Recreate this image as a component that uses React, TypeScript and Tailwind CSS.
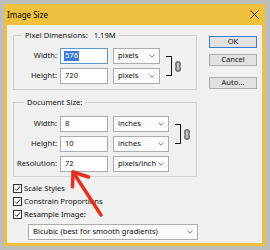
import React from "react";

const font = { fontFamily: '"Noto Sans", "Segoe UI", sans-serif' };

function Chevron() {
  return (
    <svg width="6" height="4" viewBox="0 0 6 4" className="shrink-0">
      <path d="M0.5 0.8 L3 3.2 L5.5 0.8" fill="none" stroke="#707070" strokeWidth="0.9" />
    </svg>
  );
}

function Select({ label, w }: { label: string; w: string }) {
  return (
    <div className={`${w} h-[16px] border border-[#acacac] bg-[#fbfbfb] flex items-center justify-between pl-[4px] pr-[4px]`}>
      <span className="leading-none whitespace-nowrap">{label}</span>
      <Chevron />
    </div>
  );
}

function Input({ value, selected }: { value: string; selected?: boolean }) {
  return (
    <div
      className={`w-[48px] h-[16px] bg-white border flex items-center pl-[3px] ${
        selected ? "border-[#5b9bd5]" : "border-[#abadb3]"
      }`}
    >
      {selected ? (
        <span className="bg-[#3d7bd6] text-white leading-none px-[1px] py-[1px]">{value}</span>
      ) : (
        <span className="leading-none pl-[1px]">{value}</span>
      )}
    </div>
  );
}

function Row({ label, value, unit, unitW, selected }: { label: string; value: string; unit: string; unitW: string; selected?: boolean }) {
  return (
    <div className="flex items-center h-[16px]">
      <div className="w-[46px] text-right pr-[3px] leading-none">{label}</div>
      <Input value={value} selected={selected} />
      <div className="w-[5px]" />
      <Select label={unit} w={unitW} />
    </div>
  );
}

function Link() {
  return (
    <div className="flex items-center">
      <div className="w-[6px] h-[20px] border-t-[1.5px] border-r-[1.5px] border-b-[1.5px] border-[#111]" />
      <svg width="6" height="11" viewBox="0 0 6 11" className="ml-[3px]">
        <rect x="0.5" y="0.5" width="5" height="5.5" rx="2.3" fill="#8a8a8a" stroke="#555" strokeWidth="0.8" />
        <rect x="0.5" y="5" width="5" height="5.5" rx="2.3" fill="#8a8a8a" stroke="#555" strokeWidth="0.8" />
        <rect x="2" y="2" width="2" height="7" rx="1" fill="#c4c4c4" />
      </svg>
    </div>
  );
}

function Check({ label }: { label: string }) {
  return (
    <div className="flex items-center h-[13px]">
      <div className="w-[9px] h-[9px] bg-white border border-[#333] flex items-center justify-center">
        <svg width="7" height="7" viewBox="0 0 7 7">
          <path d="M1 3.6 L2.8 5.4 L6 1.4" fill="none" stroke="#222" strokeWidth="1" />
        </svg>
      </div>
      <span className="ml-[2px] leading-none">{label}</span>
    </div>
  );
}

function Btn({ label, primary }: { label: string; primary?: boolean }) {
  return (
    <div
      className={`w-[48px] h-[12px] bg-[#e1e1e1] flex items-center justify-center leading-none ${
        primary ? "border-[1.5px] border-[#3c7fd1]" : "border border-[#adadad]"
      }`}
    >
      {label}
    </div>
  );
}

export default function App() {
  return (
    <div className="relative w-[270px] h-[250px] bg-[#bdbdbd] pt-[4px] pl-[4px] text-[7.6px] text-[#111]" style={font}>
      <div className="w-[261px] h-[242px] bg-[#efc03e] flex flex-col">
        <div className="h-[21px] flex items-center justify-between pl-[3px] pr-[6px]">
          <span className="text-[8px] text-black leading-none">Image Size</span>
          <svg width="9" height="9" viewBox="0 0 9 9">
            <path d="M0.5 0.5 L8.5 8.5 M8.5 0.5 L0.5 8.5" stroke="#222" strokeWidth="1" />
          </svg>
        </div>
        <div className="flex-1 mx-[3px] mb-[3px] bg-[#f0f0f0] flex pl-[6px] pt-[10px]">
          <div className="w-[184px] flex flex-col">
            {/* Pixel Dimensions */}
            <div className="relative h-[55px] border border-[#d0d0d0] pt-[12px] flex items-start">
              <span className="absolute -top-[6px] left-[8px] bg-[#f0f0f0] px-[3px] leading-[11px] whitespace-pre">
                Pixel Dimensions:{"   "}1.19M
              </span>
              <div className="flex flex-col gap-[4px]">
                <Row label="Width:" value="576" unit="pixels" unitW="w-[47px]" selected />
                <Row label="Height:" value="720" unit="pixels" unitW="w-[47px]" />
              </div>
              <div className="ml-[6px] mt-[8px]">
                <Link />
              </div>
            </div>
            {/* Document Size */}
            <div className="relative mt-[12px] h-[75px] border border-[#d0d0d0] pt-[13px] flex items-start">
              <span className="absolute -top-[6px] left-[10px] bg-[#f0f0f0] px-[3px] leading-[11px]">Document Size:</span>
              <div className="flex flex-col gap-[4px]">
                <Row label="Width:" value="8" unit="inches" unitW="w-[56px]" />
                <Row label="Height:" value="10" unit="inches" unitW="w-[56px]" />
                <Row label="Resolution:" value="72" unit="pixels/inch" unitW="w-[56px]" />
              </div>
              <div className="ml-[6px] mt-[8px]">
                <Link />
              </div>
            </div>
            <div className="mt-[5px] flex flex-col">
              <Check label="Scale Styles" />
              <Check label="Constrain Proportions" />
              <Check label="Resample Image:" />
            </div>
            <div className="mt-[3px] ml-[15px]">
              <Select label="Bicubic (best for smooth gradients)" w="w-[170px]" />
            </div>
          </div>
          <div className="ml-[12px] pt-[1px] flex flex-col">
            <Btn label="OK" primary />
            <div className="h-[6px]" />
            <Btn label="Cancel" />
            <div className="h-[11px]" />
            <Btn label="Auto..." />
          </div>
        </div>
      </div>
      <svg className="absolute left-0 top-0 pointer-events-none" width="270" height="250" viewBox="0 0 270 250">
        <path d="M101 215 L73 172" stroke="#e2321f" strokeWidth="3.5" strokeLinecap="round" fill="none" />
        <path d="M72.5 187 L73 172 L88.5 177" stroke="#e2321f" strokeWidth="3.5" strokeLinecap="round" strokeLinejoin="round" fill="none" />
      </svg>
    </div>
  );
}
